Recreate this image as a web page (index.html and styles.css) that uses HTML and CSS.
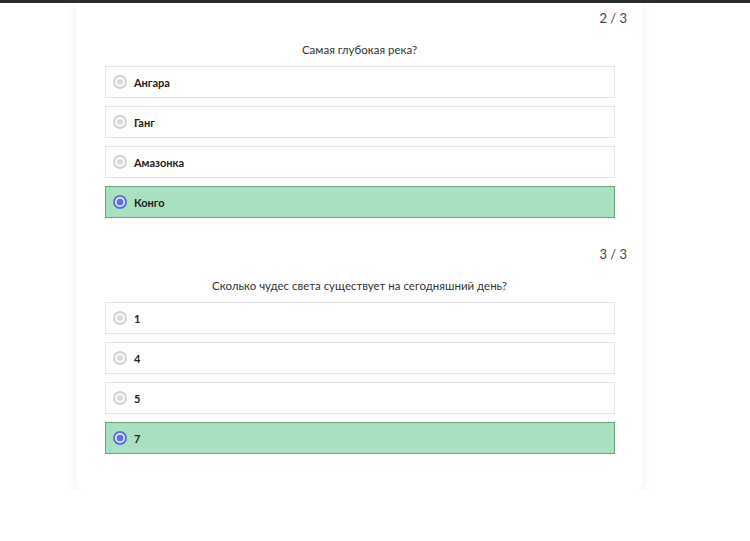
FILE: index.html
```html
<!DOCTYPE html>
<html lang="ru">
<head>
<meta charset="utf-8">
<title>Викторина</title>
<link rel="stylesheet" href="styles.css">
</head>
<body>
<div class="topbar"></div>
<main class="card">
  <section class="quiz">
    <div class="counter">2 / 3</div>
    <p class="question">Самая глубокая река?</p>
    <ul class="options">
      <li class="option"><span class="radio"></span><span class="label">Ангара</span></li>
      <li class="option"><span class="radio"></span><span class="label">Ганг</span></li>
      <li class="option"><span class="radio"></span><span class="label">Амазонка</span></li>
      <li class="option selected"><span class="radio"></span><span class="label">Конго</span></li>
    </ul>
  </section>
  <section class="quiz">
    <div class="counter">3 / 3</div>
    <p class="question">Сколько чудес света существует на сегодняшний день?</p>
    <ul class="options">
      <li class="option"><span class="radio"></span><span class="label">1</span></li>
      <li class="option"><span class="radio"></span><span class="label">4</span></li>
      <li class="option"><span class="radio"></span><span class="label">5</span></li>
      <li class="option selected"><span class="radio"></span><span class="label">7</span></li>
    </ul>
  </section>
</main>
</body>
</html>
```
FILE: styles.css
```css
* { box-sizing: border-box; }

body {
  margin: 0;
  background: #ffffff;
  font-family: "Lato", "Noto Sans", sans-serif;
  color: #333;
}

.topbar {
  position: relative;
  z-index: 2;
  height: 3px;
  background: #2a2e2e;
}

.card {
  width: 567px;
  margin: 0 0 0 76px;
  padding: 5px 16px 36px;
  background: #fff;
  border-radius: 0 0 8px 8px;
  box-shadow: 0 2px 10px rgba(0, 0, 0, 0.08);
  display: flex;
  flex-direction: column;
  gap: 26px;
}

.counter {
  text-align: right;
  font-size: 13px;
  line-height: 20px;
  color: #444;
}

.question {
  margin: 12px 0 6px;
  text-align: center;
  font-size: 11.5px;
  line-height: 20px;
  color: #333;
}

.options {
  list-style: none;
  margin: 0 12px 0 13px;
  padding: 0;
  display: flex;
  flex-direction: column;
  gap: 8px;
}

.option {
  height: 32px;
  display: flex;
  align-items: center;
  gap: 7px;
  padding-left: 7px;
  border: 1px solid #e4e4e4;
  background: #fff;
}

.option.selected {
  background: #a9e0bf;
  border-color: #6aa57c;
}

.radio {
  flex: none;
  width: 14px;
  height: 14px;
  border-radius: 50%;
  border: 2px solid #d2d2d2;
  background: #fff;
  box-shadow: inset 0 0 0 2px #fff, inset 0 0 0 6px #dadada;
}

.selected .radio {
  border-color: #5b6fe6;
  box-shadow: inset 0 0 0 1.5px #fff, inset 0 0 0 6px #5b6fe6;
}

.label {
  font-family: "Lato", "Noto Sans", sans-serif;
  font-weight: 700;
  font-size: 11px;
  color: #222;
}
```
